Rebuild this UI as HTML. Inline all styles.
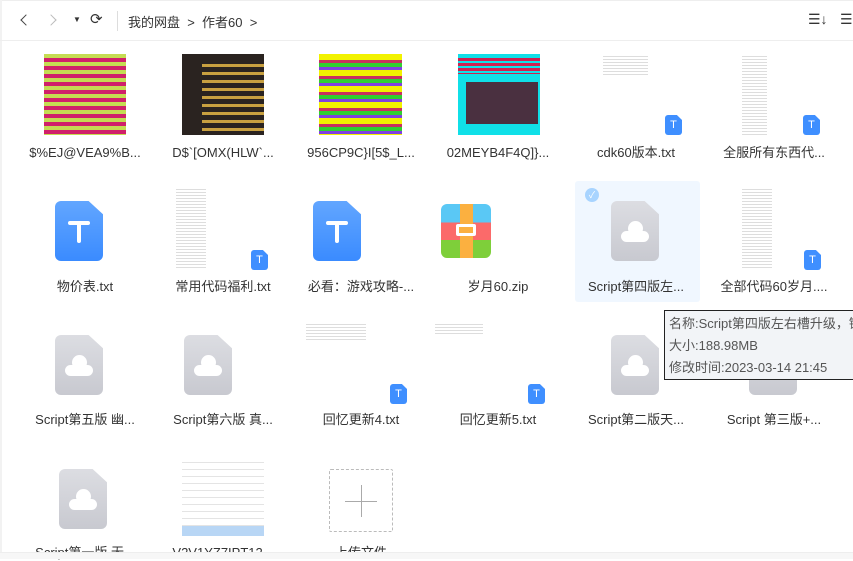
<!DOCTYPE html>
<html><head><meta charset="utf-8"><style>
*{margin:0;padding:0;box-sizing:border-box}
body{width:853px;height:559px;overflow:hidden;background:#fff;font-family:"Liberation Sans","Noto Sans CJK SC",sans-serif;color:#333;position:relative}
.a{position:absolute}
.lbl{position:absolute;width:130px;text-align:center;font-size:13px;line-height:16px;white-space:nowrap}
.tdoc{position:absolute;width:48px;height:60px;background:linear-gradient(#62a6ff,#3a8bff);border-radius:6px;clip-path:polygon(0 0,70% 0,100% 22%,100% 100%,0 100%)}
.tdoc:before{content:"";position:absolute;left:13px;top:20px;width:22px;height:4px;background:#fff;border-radius:2px}
.tdoc:after{content:"";position:absolute;left:22px;top:20px;width:4px;height:22px;background:#fff;border-radius:2px}
.badge{position:absolute;width:17px;height:20px;background:#3f8fff;border-radius:3px;clip-path:polygon(0 0,70% 0,100% 25%,100% 100%,0 100%);color:#fff;font-size:11px;text-align:center;line-height:20px}
.cdoc{position:absolute;width:48px;height:60px;background:linear-gradient(#dcdde2,#c8c9d0);border-radius:6px;clip-path:polygon(0 0,70% 0,100% 22%,100% 100%,0 100%)}
.cdoc .c1{position:absolute;left:10px;top:30px;width:28px;height:11px;background:#fff;border-radius:6px}
.cdoc .c2{position:absolute;left:17px;top:20px;width:15px;height:15px;background:#fff;border-radius:50%}
.txt{position:absolute;background:repeating-linear-gradient(#fff 0 2px,#ddd 2px 3px)}
.chev{position:absolute;width:8px;height:8px;border-left:1.5px solid #444;border-bottom:1.5px solid #444}
</style></head><body>
<div class="a" style="left:0;top:0;width:853px;height:1px;background:#eee"></div>
<div class="a" style="left:0;top:0;width:2px;height:559px;background:#f2f2f2"></div>
<div class="a" style="left:0;top:40px;width:853px;height:1px;background:#eee"></div>
<div class="chev" style="left:22px;top:16px;transform:rotate(45deg)"></div>
<div class="chev" style="left:47px;top:16px;transform:rotate(-135deg);border-color:#bbb"></div>
<div class="a" style="left:73px;top:15px;font-size:8px;color:#333">▼</div>
<div class="a" style="left:90px;top:10px;font-size:15px;color:#333">⟳</div>
<div class="a" style="left:117px;top:11px;width:1px;height:20px;background:#ddd"></div>
<div class="a" style="left:128px;top:12px;font-size:13px">我的网盘 &nbsp;&gt;&nbsp; 作者60 &nbsp;&gt;</div>
<div class="a" style="left:808px;top:11px;font-size:14px">☰↓</div>
<div class="a" style="left:840px;top:11px;font-size:14px">☰</div>

<!-- row1 -->
<div class="a" style="left:44px;top:54px;width:82px;height:81px;background:repeating-linear-gradient(#c5dc52 0 4px,#d0206a 4px 8px)"></div>
<div class="a" style="left:182px;top:54px;width:82px;height:81px;background:#2a2320"><div class="a" style="left:20px;top:5px;width:62px;height:72px;background:repeating-linear-gradient(#2a2320 0 5px,#c8a040 5px 8px)"></div></div>
<div class="a" style="left:319px;top:54px;width:83px;height:81px;background:repeating-linear-gradient(#f2f200 0 6px,#c83060 6px 9px,#30d030 9px 13px,#8040e0 13px 16px)"></div>
<div class="a" style="left:458px;top:54px;width:82px;height:81px;background:#10e0e8"><div class="a" style="left:8px;top:28px;width:72px;height:42px;background:#4a3040"></div><div class="a" style="left:0;top:4px;width:82px;height:16px;background:repeating-linear-gradient(#d02050 0 3px,#10e0e8 3px 5px)"></div></div>
<div class="txt" style="left:603px;top:54px;width:45px;height:22px"></div>
<div class="badge" style="left:665px;top:115px">T</div>
<div class="txt" style="left:742px;top:54px;width:25px;height:81px"></div>
<div class="badge" style="left:803px;top:115px">T</div>
<div class="lbl" style="left:20px;top:145px">$%EJ@VEA9%B...</div>
<div class="lbl" style="left:158px;top:145px">D$`[OMX(HLW`...</div>
<div class="lbl" style="left:296px;top:145px">956CP9C}I[5$_L...</div>
<div class="lbl" style="left:433px;top:145px">02MEYB4F4Q]}...</div>
<div class="lbl" style="left:571px;top:145px">cdk60版本.txt</div>
<div class="lbl" style="left:709px;top:145px">全服所有东西代...</div>

<!-- row2 -->
<div class="a" style="left:575px;top:181px;width:125px;height:121px;background:#f0f7ff;border-radius:3px"></div>
<div class="a" style="left:585px;top:188px;width:14px;height:14px;border-radius:50%;background:#a8d4ff;color:#fff;font-size:9px;text-align:center;line-height:14px">✓</div>
<div class="tdoc" style="left:55px;top:201px"></div>
<div class="txt" style="left:176px;top:187px;width:30px;height:82px"></div>
<div class="badge" style="left:251px;top:250px">T</div>
<div class="tdoc" style="left:313px;top:201px"></div>
<div class="a" style="left:441px;top:204px;width:50px;height:54px;border-radius:6px;overflow:hidden;background:linear-gradient(#5ac8f5 0 34%,#fb6a6a 34% 67%,#7ecf3a 67%)"><div class="a" style="left:19px;top:0;width:13px;height:54px;background:#fbb040"></div><div class="a" style="left:15px;top:20px;width:20px;height:12px;background:#fff;border-radius:2px"></div><div class="a" style="left:18px;top:23px;width:14px;height:6px;background:#fbb040"></div></div>
<div class="cdoc" style="left:611px;top:201px"><div class="c2"></div><div class="c1"></div></div>
<div class="txt" style="left:742px;top:187px;width:30px;height:82px"></div>
<div class="badge" style="left:804px;top:250px">T</div>
<div class="lbl" style="left:20px;top:279px">物价表.txt</div>
<div class="lbl" style="left:158px;top:279px">常用代码福利.txt</div>
<div class="lbl" style="left:296px;top:279px">必看：游戏攻略-...</div>
<div class="lbl" style="left:433px;top:279px">岁月60.zip</div>
<div class="lbl" style="left:571px;top:279px">Script第四版左...</div>
<div class="lbl" style="left:709px;top:279px">全部代码60岁月....</div>

<!-- row3 -->
<div class="cdoc" style="left:55px;top:335px"><div class="c2"></div><div class="c1"></div></div>
<div class="cdoc" style="left:184px;top:335px"><div class="c2"></div><div class="c1"></div></div>
<div class="txt" style="left:306px;top:322px;width:60px;height:20px"></div>
<div class="badge" style="left:390px;top:384px">T</div>
<div class="txt" style="left:435px;top:322px;width:48px;height:12px"></div>
<div class="badge" style="left:528px;top:384px">T</div>
<div class="cdoc" style="left:611px;top:335px"><div class="c2"></div><div class="c1"></div></div>
<div class="cdoc" style="left:749px;top:335px"><div class="c2"></div><div class="c1"></div></div>
<div class="lbl" style="left:20px;top:412px">Script第五版 幽...</div>
<div class="lbl" style="left:158px;top:412px">Script第六版 真...</div>
<div class="lbl" style="left:296px;top:412px">回忆更新4.txt</div>
<div class="lbl" style="left:433px;top:412px">回忆更新5.txt</div>
<div class="lbl" style="left:571px;top:412px">Script第二版天...</div>
<div class="lbl" style="left:709px;top:412px">Script 第三版+...</div>

<div class="a" style="left:664px;top:310px;width:195px;height:70px;background:#f2f4f7;border:1px solid #222;font-size:13px;color:#555;line-height:22px;padding:2px 0 0 4px;white-space:nowrap;overflow:hidden">名称:Script第四版左右槽升级，锻造<br>大小:188.98MB<br>修改时间:2023-03-14 21:45</div>

<!-- row4 -->
<div class="cdoc" style="left:59px;top:469px"><div class="c2"></div><div class="c1"></div></div>
<div class="a" style="left:182px;top:456px;width:82px;height:80px;background:repeating-linear-gradient(#fff 0 6px,#e4e4e4 6px 7px)"><div class="a" style="left:0;top:70px;width:82px;height:10px;background:#b8d6f5"></div></div>
<div class="a" style="left:329px;top:469px;width:64px;height:63px;border:1px dashed #bbb;border-radius:2px"><div class="a" style="left:15px;top:31px;width:32px;height:1px;background:#aaa"></div><div class="a" style="left:31px;top:15px;width:1px;height:32px;background:#aaa"></div></div>
<div class="lbl" style="left:20px;top:545px">Script第一版 无...</div>
<div class="lbl" style="left:158px;top:545px">V2V1YZ7IPT12...</div>
<div class="lbl" style="left:296px;top:545px">上传文件</div>
<div class="a" style="left:0;top:552px;width:853px;height:7px;background:#f7f7f7;border-top:1px solid #eee"></div>
</body></html>
